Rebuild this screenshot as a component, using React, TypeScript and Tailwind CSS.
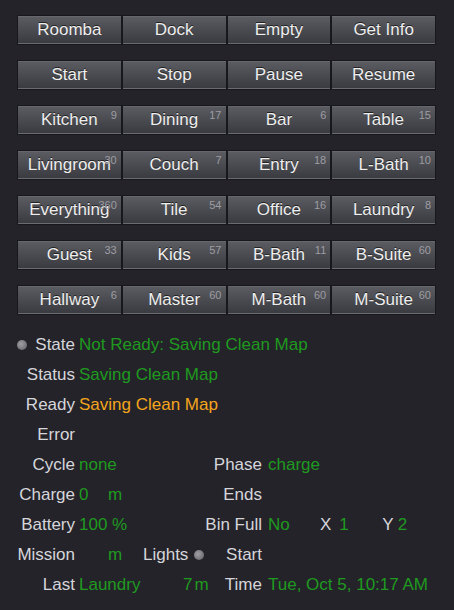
import React from "react";

type Btn = { label: string; badge?: string };

const rows: Btn[][] = [
  [{ label: "Roomba" }, { label: "Dock" }, { label: "Empty" }, { label: "Get Info" }],
  [{ label: "Start" }, { label: "Stop" }, { label: "Pause" }, { label: "Resume" }],
  [
    { label: "Kitchen", badge: "9" },
    { label: "Dining", badge: "17" },
    { label: "Bar", badge: "6" },
    { label: "Table", badge: "15" },
  ],
  [
    { label: "Livingroom", badge: "30" },
    { label: "Couch", badge: "7" },
    { label: "Entry", badge: "18" },
    { label: "L-Bath", badge: "10" },
  ],
  [
    { label: "Everything", badge: "360" },
    { label: "Tile", badge: "54" },
    { label: "Office", badge: "16" },
    { label: "Laundry", badge: "8" },
  ],
  [
    { label: "Guest", badge: "33" },
    { label: "Kids", badge: "57" },
    { label: "B-Bath", badge: "11" },
    { label: "B-Suite", badge: "60" },
  ],
  [
    { label: "Hallway", badge: "6" },
    { label: "Master", badge: "60" },
    { label: "M-Bath", badge: "60" },
    { label: "M-Suite", badge: "60" },
  ],
];

function Dot() {
  return (
    <span className="inline-block h-[10px] w-[10px] rounded-full bg-[radial-gradient(circle_at_40%_40%,#a0a0a4,#5e5e62)]" />
  );
}

function RoomButton({ label, badge }: Btn) {
  return (
    <button className="relative flex h-[30px] items-center justify-center border border-[#18181c] bg-linear-to-b from-[#5c5d63] to-[#393a3f] text-[17px] text-[#eeeeee] shadow-[inset_0_-1px_0_#6a6b70,inset_0_1px_0_#66676c] [text-shadow:0_-1px_0_#222]">
      {label}
      {badge && (
        <span className="absolute right-[4px] top-[2px] text-[11px] leading-[14px] text-[#9d9da2] [text-shadow:none]">
          {badge}
        </span>
      )}
    </button>
  );
}

const G = "text-[#1f9a1f]";

function Row({
  label,
  middle,
  label2,
  right,
}: {
  label: React.ReactNode;
  middle?: React.ReactNode;
  label2?: string;
  right?: React.ReactNode;
}) {
  return (
    <div className="flex h-[30px] items-center whitespace-nowrap">
      <span className="w-[75px] text-right">{label}</span>
      <div className="flex w-[187px] items-center pl-1">
        {middle}
        {label2 && <span className="ml-auto">{label2}</span>}
      </div>
      <div className="flex items-center pl-[6px]">{right}</div>
    </div>
  );
}

export default function App() {
  return (
    <div
      className="min-h-screen bg-[#24232a] px-[17px] pt-[15px] text-[17px] text-[#d6d6da]"
      style={{ fontFamily: '"Liberation Sans", Arial, sans-serif' }}
    >
      <div className="flex w-[419px] flex-col gap-[15px]">
        {rows.map((r, i) => (
          <div key={i} className="grid grid-cols-4">
            {r.map((b) => (
              <RoomButton key={b.label} {...b} />
            ))}
          </div>
        ))}
      </div>

      <div className="-mx-[17px] mt-[15px]">
        <div className="flex h-[30px] items-center whitespace-nowrap">
          <span className="flex w-[75px] items-center justify-between pl-[17px]">
            <Dot />
            <span>State</span>
          </span>
          <span className={`pl-1 ${G}`}>Not Ready: Saving Clean Map</span>
        </div>
        <Row label="Status" middle={<span className={G}>Saving Clean Map</span>} />
        <Row label="Ready" middle={<span className="text-[#f3a51c]">Saving Clean Map</span>} />
        <Row label="Error" />
        <Row
          label="Cycle"
          middle={<span className={G}>none</span>}
          label2="Phase"
          right={<span className={G}>charge</span>}
        />
        <Row
          label="Charge"
          middle={
            <>
              <span className={`w-[29px] ${G}`}>0</span>
              <span className={G}>m</span>
            </>
          }
          label2="Ends"
        />
        <Row
          label="Battery"
          middle={<span className={G}>100 %</span>}
          label2="Bin Full"
          right={
            <>
              <span className={`w-[52px] ${G}`}>No</span>
              <span>X</span>
              <span className={`ml-[8px] w-[43px] ${G}`}>1</span>
              <span>Y</span>
              <span className={`ml-[4px] ${G}`}>2</span>
            </>
          }
        />
        <Row
          label="Mission"
          middle={
            <>
              <span className="w-[29px]" />
              <span className={`w-[35px] ${G}`}>m</span>
              <span>Lights</span>
              <span className="ml-[6px] flex items-center">
                <Dot />
              </span>
            </>
          }
          label2="Start"
        />
        <Row
          label="Last"
          middle={
            <>
              <span className={`w-[104px] ${G}`}>Laundry</span>
              <span className={G}>7</span>
              <span className={`ml-[2px] ${G}`}>m</span>
            </>
          }
          label2="Time"
          right={<span className={G}>Tue, Oct 5, 10:17 AM</span>}
        />
      </div>
    </div>
  );
}
